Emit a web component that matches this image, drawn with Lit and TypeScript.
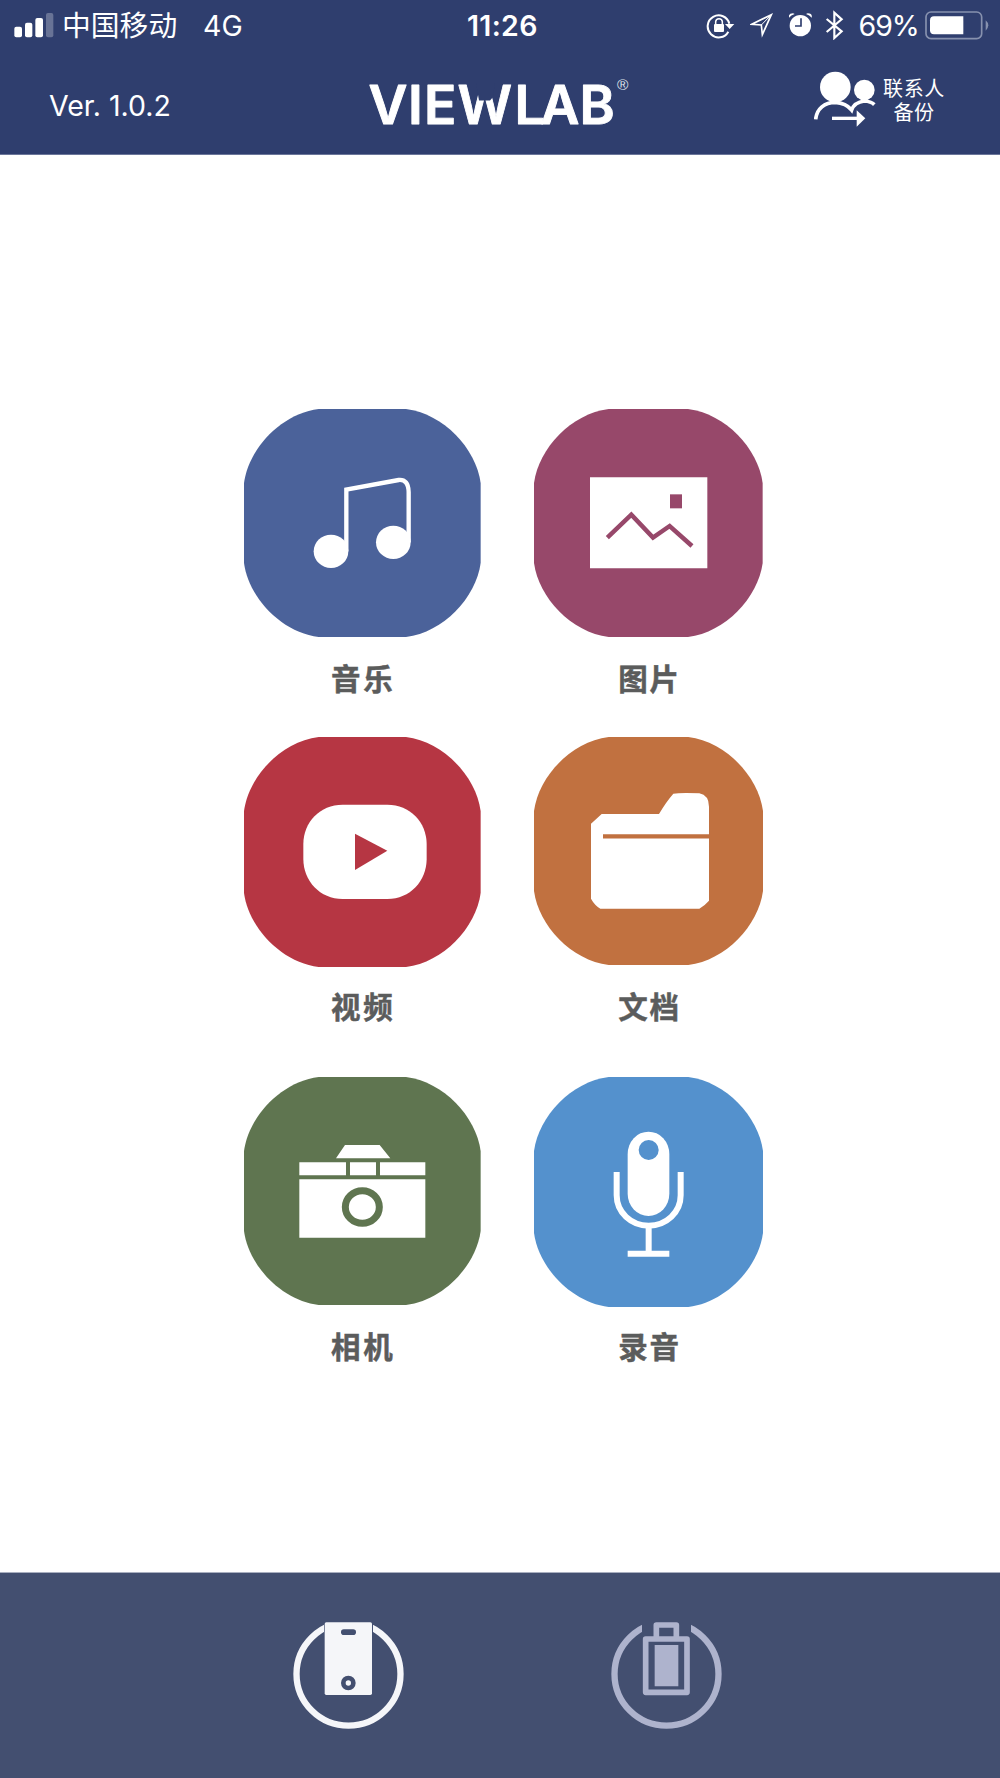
import { LitElement, html, svg, css, TemplateResult } from "lit";
import { customElement } from "lit/decorators.js";

/* Every icon is drawn on a grid of three units per CSS pixel. */
const icon = (cls: string, x: number, y: number, w: number, h: number, body: TemplateResult) =>
  html`<svg class=${cls} width=${w / 3} height=${h / 3} viewBox="${x} ${y} ${w} ${h}">${body}</svg>`;

interface Tile {
  label: string;
  color: string;
  x: number;
  y: number;
  w: number;
  h: number;
  art: TemplateResult;
}

/* Tile silhouette: four flat sides joined by wide, slightly flattened arcs. */
const blob = (t: Tile) => {
  const r = t.x + t.w;
  const b = t.y + t.h;
  const cy = 222;
  const cx = 224;
  return `M${t.x + cx} ${t.y}H${r - cx}
    C${r - 112} ${t.y + 14} ${r - 14} ${t.y + 118} ${r} ${t.y + cy}
    V${b - cy}C${r - 14} ${b - 118} ${r - 112} ${b - 14} ${r - cx} ${b}
    H${t.x + cx}C${t.x + 112} ${b - 14} ${t.x + 14} ${b - 118} ${t.x} ${b - cy}
    V${t.y + cy}C${t.x + 14} ${t.y + 118} ${t.x + 112} ${t.y + 14} ${t.x + cx} ${t.y}Z`;
};

const tiles: Tile[] = [
  {
    label: "音乐", color: "#4b629a", x: 42, y: 27, w: 710, h: 684,
    art: svg`<ellipse cx="303" cy="454" rx="52" ry="50" fill="#fff"/>
      <ellipse cx="490" cy="427" rx="52" ry="50" fill="#fff"/>
      <path d="M349 454V269L506 240Q535 237 536 276V427" fill="none" stroke="#fff" stroke-width="13"/>`,
  },
  {
    label: "图片", color: "#97486a", x: 42, y: 27, w: 686, h: 684,
    art: svg`<path d="M210 232H562V505H210Z" fill="#fff"/>
      <path d="M450 283H486V325H450Z" fill="#97486a"/>
      <path d="M262 413L334 344L399 413L449 378L516 438" fill="none" stroke="#97486a" stroke-width="13.500"/>`,
  },
  {
    label: "视频", color: "#b63643", x: 42, y: 36, w: 710, h: 690,
    art: svg`<path d="M338 239H472C540 239 590 292 590 357V402C590 468 540 522 472 522H338C270 522 220 468 220 402V357C220 292 270 239 338 239Z" fill="#fff"/>
      <path d="M375 326L472 377L375 435Z" fill="#b63643"/>`,
  },
  {
    label: "文档", color: "#c17140", x: 42, y: 36, w: 687, h: 684,
    art: svg`<path d="M213 296L245 267H417Q438 231 460 206Q480 203 538 205Q567 211 567 245V527Q555 541 538 551H241Q224 541 213 521Z" fill="#fff"/>
      <path d="M249 334H568" stroke="#c17140" stroke-width="13"/>`,
  },
  {
    label: "相机", color: "#5f7550", x: 42, y: 36, w: 710, h: 684,
    art: svg`<path d="M345 240H449L481 280H318ZM208 292H348V331H208ZM360 292H438V331H360ZM450 292H586V331H450ZM208 343H586V518H208Z" fill="#fff"/>
      <ellipse cx="397" cy="426" rx="51" ry="49" fill="none" stroke="#5f7550" stroke-width="21"/>`,
  },
  {
    label: "录音", color: "#5491cd", x: 42, y: 36, w: 687, h: 690,
    art: svg`<rect x="323" y="200" width="125" height="253" rx="62.5" ry="67" fill="#fff"/>
      <circle cx="386" cy="255" r="30" fill="#5491cd"/>
      <path d="M290 321V391C290 442 333 482 386 482S482 442 482 391V321M386 482V566M323 566H448" fill="none" stroke="#fff" stroke-width="18"/>`,
  },
];

const statusIcons = {
  signal: svg`<rect x="43" y="77" width="23" height="32" rx="6"/><rect x="75" y="65" width="22" height="44" rx="6"/>
    <rect x="106" y="51" width="23" height="58" rx="6"/><rect x="138" y="36" width="22" height="73" rx="6" opacity=".28"/>`,
  lock: svg`<path d="M208 68A33 33 0 1 0 205 92" fill="none" stroke="#fff" stroke-width="6"/>
    <path d="M195 69H223L209 84Z"/><rect x="162" y="69" width="30" height="24" rx="3"/>
    <path d="M167 70V62Q168 53 177 53T187 62V70" fill="none" stroke="#fff" stroke-width="4.500"/>`,
  location: svg`<path d="M275 72L334 43L307 103L304 74Z" fill="none" stroke="#fff" stroke-width="5"/><path d="M304 74L334 43" stroke="#fff" stroke-width="3"/>`,
  alarm: svg`<circle cx="421" cy="76" r="32"/><path d="M387 52Q384 39 399 39L404 41Q393 45 387 52ZM455 52Q458 39 443 39L438 41Q449 45 455 52Z"/>
    <path d="M423 54V77H405" fill="none" stroke="#2f3e6e" stroke-width="5"/>`,
  bluetooth: svg`<path d="M500 55L545 92L523 112V36L545 56L500 94" fill="none" stroke="#fff" stroke-width="6.500"/>`,
  battery: svg`<rect x="797" y="32" width="167" height="80" rx="15" fill="none" stroke="#8791ae" stroke-width="5"/>
    <path d="M976 57Q984 64 984 72T976 88Z" fill="#8791ae"/><path d="M821 45H909V99H821Q809 99 809 87V57Q809 45 821 45Z"/>`,
};

const contacts = svg`<circle cx="526" cy="261" r="46"/><circle cx="613" cy="270" r="31"/>
  <path d="M467 358C470 326 494 307 526 307Q558 309 575 330Q583 307 613 303Q633 304 643 314" fill="none" stroke="#fff" stroke-width="11"/>
  <path d="M516 355H596" stroke="#fff" stroke-width="10"/><path d="M590 331L616 355L590 380Z"/>`;

const phoneTab = svg`<ellipse cx="234.500" cy="341" rx="156" ry="155" fill="none" stroke="#f5f6f9" stroke-width="19"/>
  <path d="M161 180H308V250H161Z" fill="#434f70"/><rect x="163" y="186" width="142" height="218" rx="5" fill="#f5f6f9"/>
  <rect x="212" y="207" width="45" height="17" rx="8.500" fill="#434f70"/><circle cx="234" cy="368" r="15" fill="none" stroke="#434f70" stroke-width="14"/>`;

const usbTab = svg`<ellipse cx="1188.500" cy="341" rx="156" ry="155" fill="none" stroke="#aeb3cd" stroke-width="19"/>
  <path d="M1115 180H1262V235H1115Z" fill="#434f70"/>
  <path d="M1158 236V194H1218V236M1126 236H1250V396H1126Z" fill="none" stroke="#aeb3cd" stroke-width="17" stroke-linejoin="round"/>
  <path d="M1153 254H1224V378H1153Z" fill="#aeb3cd"/>`;

@customElement("app-root")
export class AppRoot extends LitElement {
  static styles = css`
    :host {
      display: flex;
      flex-direction: column;
      width: 1000px;
      height: 1778px;
      background: #fff;
      font-family: Inter, "Noto Sans CJK SC", sans-serif;
      color: #fff;
    }
    svg { display: block; flex: none; fill: #fff; }
    header {
      box-sizing: border-box;
      height: 155px;
      background: #2f3e6e;
      border-bottom: 1px solid #6b769a;
    }
    .status { display: flex; align-items: center; height: 50px; font-size: 28.5px; white-space: nowrap; }
    .signal { margin-left: 14px; }
    .left { display: flex; align-items: center; width: 467px; }
    .carrier { width: 141px; margin-left: 8px; padding-bottom: 2px; font-family: "Noto Sans CJK SC", sans-serif; font-size: 28.8px; line-height: 46px; }
    .time { width: 239px; font-weight: 600; letter-spacing: 0.3px; }
    .location { margin-left: 15px; }
    .alarm { margin-left: 15px; }
    .bluetooth { margin-left: 13px; }
    .percent { width: 66px; margin-left: 14.5px; letter-spacing: -1px; }
    .nav { display: grid; grid-template-columns: 369px 445px 68px 1fr; height: 104px; }
    .version { padding: 38px 0 0 49px; font-size: 28.5px; line-height: 35px; }
    .logo { padding-top: 26px; overflow: visible; }
    .wordmark { font: 600 53.500px Inter, sans-serif; stroke: #fff; stroke-width: 0.9px; stroke-linejoin: round; }
    .reg { font: 400 15.500px "Liberation Sans", sans-serif; fill: #dfe2ea; }
    .contacts { padding-top: 21px; }
    .backup {
      width: 64px;
      padding-top: 26px;
      text-align: center;
      font-family: "Noto Sans CJK SC", sans-serif;
      font-size: 20px;
      line-height: 24px;
      letter-spacing: 0.6px;
    }
    main {
      flex: 1;
      display: grid;
      grid-template-columns: 236.67px 229px;
      grid-template-rows: 328px 340px 340px;
      column-gap: 53.330px;
      align-content: start;
      padding: 254px 0 0 244px;
    }
    .tile { display: flex; flex-direction: column; align-items: center; }
    .art { height: 228px; display: flex; }
    .label {
      margin-top: 18px;
      padding-left: 2px;
      font: 700 29.500px/44px "Noto Sans CJK SC", sans-serif;
      letter-spacing: 1.7px;
      -webkit-text-stroke: 0.5px #5b5c5c;
      color: #5b5c5c;
    }
    .tile:nth-child(odd) .label { letter-spacing: 2.8px; }
    footer {
      box-sizing: border-box;
      height: 206px;
      display: flex;
      gap: 207px;
      padding: 49px 0 0 292.670px;
      background: #434f70;
      border-top: 1px solid #a9afc0;
    }
  `;

  render() {
    return html`
      <header>
        <div class="status">
          <div class="left">
            ${icon("signal", 42, 33, 120, 79, statusIcons.signal)}
            <span class="carrier">中国移动</span>
            <span>4G</span>
          </div>
          <span class="time">11:26</span>
          ${icon("lock", 138, 30, 87, 85, statusIcons.lock)}
          ${icon("location", 270, 35, 72, 80, statusIcons.location)}
          ${icon("alarm", 387, 35, 69, 80, statusIcons.alarm)}
          ${icon("bluetooth", 495, 28, 57, 92, statusIcons.bluetooth)}
          <span class="percent">69%</span>
          ${icon("battery", 794, 29, 192, 87, statusIcons.battery)}
        </div>
        <div class="nav">
          <div class="version">Ver. 1.0.2</div>
          <svg class="logo" width="262" height="52" viewBox="369 76 262 52">
            <text class="wordmark" y="124" x="368.5 408 424 457.5 514.5 540.5 579.5">VIEWLAB</text>
            <path d="M476 83H495L493 97L490 100.5H479Z" fill="#2f3e6e"/>
            <text class="reg" x="617" y="89.5">®</text>
          </svg>
          ${icon("contacts", 462, 213, 186, 170, contacts)}
          <div class="backup">联系人<br />备份</div>
        </div>
      </header>
      <main>
        ${tiles.map(
          (t) => html`<div class="tile">
            <div class="art">${icon("shape", t.x, t.y, t.w, t.h, svg`<path d=${blob(t)} fill=${t.color}/>${t.art}`)}</div>
            <div class="label">${t.label}</div>
          </div>`
        )}
      </main>
      <footer>
        ${icon("tab", 68, 185, 333, 323, phoneTab)}
        ${icon("tab", 1022, 185, 333, 323, usbTab)}
      </footer>
    `;
  }
}
